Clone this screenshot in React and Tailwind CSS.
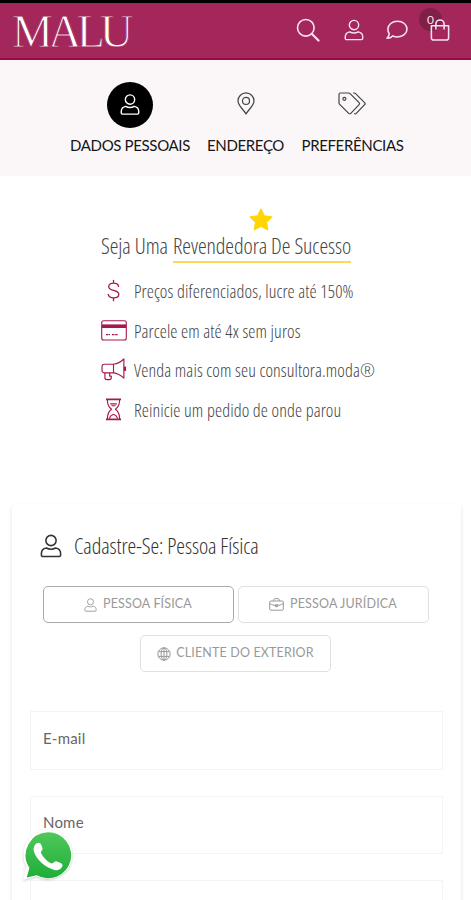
import React, { useState } from 'react';

const UserIcon = ({ className }) => (
  <svg viewBox="0 0 24 26" className={className} fill="none" stroke="currentColor" strokeWidth="1.7" strokeLinejoin="round">
    <circle cx="12" cy="7" r="5.6" />
    <path d="M7 15.2c1.500 .9 3.200 1.300 5 1.300s3.500-.4 5-1.300c3.400.5 5.500 2.900 5.500 6.300v1.400c0 .9-.7 1.600-1.600 1.600H3.100c-.9 0-1.600-.7-1.600-1.600v-1.400c0-3.400 2.100-5.800 5.500-6.300z" />
  </svg>
);

const SearchIcon = ({ className }) => (
  <svg viewBox="0 0 24 24" className={className} fill="none" stroke="currentColor" strokeWidth="1.6" strokeLinecap="round">
    <circle cx="9.800" cy="9.800" r="8.300" />
    <path d="M16 16l6.500 6.500" strokeWidth="2.200" />
  </svg>
);

const ChatIcon = ({ className }) => (
  <svg viewBox="0 0 22 20" className={className} fill="none" stroke="currentColor" strokeWidth="1.600" strokeLinejoin="round">
    <path d="M11.500 1.200c5.300 0 9.500 3.500 9.500 7.900s-4.200 7.900-9.500 7.900c-1.800 0-3.400-.4-4.900-1.100-1.100 1.400-3 2.300-5.600 2.400 1.200-1.300 2-2.800 2.200-4.500C2.300 12.500 1.900 10.900 1.900 9.100c0-4.400 4.300-7.900 9.600-7.900z" />
  </svg>
);

const BagIcon = ({ className }) => (
  <svg viewBox="0 0 20 23" className={className} fill="none" stroke="currentColor" strokeWidth="1.600" strokeLinejoin="round">
    <path d="M1 7h18v12.500a2.500 2.500 0 0 1-2.500 2.500h-13A2.500 2.500 0 0 1 1 19.500z" />
    <path d="M5.700 10.500V5.300a4.300 4.300 0 0 1 8.600 0v5.200" strokeLinecap="round" />
  </svg>
);

const PinIcon = ({ className }) => (
  <svg viewBox="0 0 18 23" className={className} fill="none" stroke="currentColor" strokeWidth="1.200" strokeLinejoin="round">
    <path d="M9 22C6.500 17.500 1 13.500 1 8.900a8 8 0 0 1 16 0C17 13.500 11.500 17.500 9 22z" />
    <circle cx="9" cy="8.900" r="3.500" />
  </svg>
);

const TagsIcon = ({ className }) => (
  <svg viewBox="0 0 28 23" className={className} fill="none" stroke="currentColor" strokeWidth="1.200" strokeLinejoin="round">
    <path d="M1 2.500A1.500 1.500 0 0 1 2.500 1h8.200c.5 0 1 .2 1.400.6l9 9c.6.6.6 1.500 0 2.100l-8.300 8.600c-.6.6-1.500.6-2.100 0l-9-9c-.4-.4-.7-.9-.7-1.400z" />
    <path d="M15 1h1.200c.5 0 1 .2 1.400.6l9 9c.6.6.6 1.500 0 2.100l-8.300 8.600c-.6.6-1.500.6-2.100 0" />
    <circle cx="6.400" cy="6.800" r="1.500" />
  </svg>
);

const DollarIcon = () => (
  <svg viewBox="0 0 14 24" className="mr-[2px] h-[23px] w-[13px]" fill="none" stroke="currentColor" strokeWidth="1.400" strokeLinecap="round">
    <path d="M7 1v3M7 20v3M12.500 7.500C12 5.200 10 4 7.200 4 4 4 1.800 5.500 1.800 7.900c0 5.200 10.900 2.700 10.900 8.100 0 2.500-2.400 4-5.500 4-3.200 0-5.400-1.400-5.900-3.800" />
  </svg>
);

const CardIcon = () => (
  <svg viewBox="0 0 26 21" className="h-[21px] w-[26px]" fill="none" stroke="currentColor">
    <rect x=".7" y=".7" width="24.600" height="19.300" rx="2" strokeWidth="1.100" />
    <path d="M1 6.200h24" strokeWidth="3.600" />
    <path d="M5 14.700h4M11 14.700h6" strokeWidth="1.200" strokeDasharray="2.500 .6" />
  </svg>
);

const MegaphoneIcon = () => (
  <svg viewBox="0 0 27 24" className="h-[23px] w-[26px]" fill="none" stroke="currentColor" strokeWidth="1.200" strokeLinejoin="round">
    <path d="M3.500 6.500h9.500v9H3.500A2.500 2.500 0 0 1 1 13V9a2.500 2.500 0 0 1 2.500-2.500z" />
    <path d="M13 6.500c4-.5 7.500-2.400 10.800-5.500v20c-3.300-3-6.800-5-10.800-5.500" />
    <path d="M4 15.500v4.900c0 1.200.8 2.100 2 2.100h2.700c1.200 0 2-.9 2-2.100v-1.500H9v-3.400" />
    <path d="M25 9v4.500" strokeWidth="2.200" />
  </svg>
);

const HourglassIcon = () => (
  <svg viewBox="0 0 18 24" className="mr-[1px] h-[23px] w-[17px]" fill="none" stroke="currentColor" strokeWidth="1.200" strokeLinejoin="round">
    <path d="M1 1.200h16M1 22.500h16" strokeWidth="1.800" />
    <path d="M2.500 1.500c0 5.500 1.700 8.500 4.500 10.300-2.800 1.900-4.500 5-4.500 10.400M15.500 1.500c0 5.500-1.700 8.500-4.500 10.300 2.800 1.900 4.500 5 4.500 10.400" />
    <path d="M5.500 6h7M6.800 8h4.500M4.500 21.500c.8-2.200 2.300-3.600 4.500-4.500 2.200.9 3.700 2.300 4.500 4.500" />
  </svg>
);

const BriefcaseIcon = ({ className }) => (
  <svg viewBox="0 0 15 13" className={className} fill="none" stroke="currentColor" strokeWidth="1">
    <rect x=".7" y="3" width="13.600" height="9.200" rx="1" />
    <path d="M4.700 3V1.700c0-.6.400-1 1-1h3.600c.6 0 1 .4 1 1V3M.7 5.500c2 1.300 4 2 6.800 2s4.800-.7 6.800-2" />
    <path d="M6.300 6.700h2.400v2H6.300z" />
  </svg>
);

const GlobeIcon = ({ className }) => (
  <svg viewBox="0 0 14 14" className={className} fill="none" stroke="currentColor" strokeWidth="1">
    <circle cx="7" cy="7" r="6.200" />
    <ellipse cx="7" cy="7" rx="2.900" ry="6.200" />
    <path d="M7 .8v12.400M1.300 4.600h11.400M1.300 9.400h11.400" />
  </svg>
);

const WhatsAppIcon = ({ className }) => (
  <svg viewBox="0 0 54 54" className={className}>
    <defs>
      <linearGradient id="wa" x1="0" y1="0" x2="0" y2="1">
        <stop offset="0" stopColor="#4fc85b" />
        <stop offset="1" stopColor="#1eae38" />
      </linearGradient>
    </defs>
    <path d="M27 2a24.500 24.500 0 1 1-11.500 46.200L2 52l3.600-13.200A24.500 24.500 0 0 1 27 2z" fill="#fff" />
    <path d="M27 4.300a23 23 0 1 1-11.200 43L5.800 49.600l2.600-9.800A23 23 0 0 1 27 4.300z" fill="url(#wa)" />
    <path d="M15.300 15.600c1.600-1.300 3.500-1.100 4.300.2 1 1.500 1.500 3.100 1.900 4.800.4 1.800-2.200 3.100-1.400 4.700 2.100 4.200 5.700 8 9.800 10 1.800.8 3.600-2.600 5.400-2.100 1.800.5 3.500 1.200 5.200 2.200 1.200.8 1.300 2.100.6 3.400-1.300 2.500-4.300 4-7.700 3.200-8.600-2-18.900-11-20.600-18.900-.6-2.800.4-5.800 2.500-7.500z" fill="#fff" />
  </svg>
);

const benefits = [
  { icon: <DollarIcon />, text: 'Preços diferenciados, lucre até 150%' },
  { icon: <CardIcon />, text: 'Parcele em até 4x sem juros' },
  { icon: <MegaphoneIcon />, text: 'Venda mais com seu consultora.moda®' },
  { icon: <HourglassIcon />, text: 'Reinicie um pedido de onde parou' },
];

const App = () => {
  const [type, setType] = useState('fisica');

  const typeClass = (name) =>
    `flex h-[37px] w-[191px] items-center justify-center rounded-[5px] border text-[12.500px] tracking-[0.150px] text-[#999] ${
      type === name ? 'border-[#aaa]' : 'border-[#e0e0e0]'
    }`;

  return (
    <div className="h-[900px] w-[471px] overflow-hidden bg-white font-['Lato',sans-serif]">
      <header className="flex h-[60px] items-center justify-between border-t-[3px] border-b-2 border-t-black border-b-[#960b43] bg-[#a3275b] pl-[12px] pr-[21px] text-[#fae3ee]">
        <div className="pt-[3px] font-['Liberation_Serif',serif] text-[46px] leading-[52px] tracking-[-4.700px] text-white [-webkit-text-stroke:0.9px_#a3275b]">MALU</div>
        <nav className="flex items-center pb-[1px]">
          <SearchIcon className="h-[24px] w-[24px]" />
          <UserIcon className="ml-[24px] h-[22px] w-[20px]" />
          <ChatIcon className="ml-[22px] h-[20px] w-[22px]" />
          <div className="relative ml-[22px]">
            <span className="absolute top-[-11px] left-[-11px] flex h-[23px] w-[23px] items-center justify-center rounded-full bg-[#7f2049] text-[12px]">0</span>
            <BagIcon className="relative h-[22px] w-[20px]" />
          </div>
        </nav>
      </header>

      <section className="flex h-[116px] justify-center bg-[#fbf7f9] pt-[22px] pl-[3px] text-[15px] tracking-[-0.350px] text-[#151515]">
        <div className="flex w-[120px] flex-col items-center">
          <div className="flex h-[46px] w-[46px] items-center justify-center rounded-full bg-black pb-[2px] text-white">
            <UserIcon className="h-[23px] w-[20px]" />
          </div>
          <span className="mt-[7px] leading-[21px] whitespace-nowrap">DADOS PESSOAIS</span>
        </div>
        <div className="ml-[17px] flex w-[77px] flex-col items-center">
          <div className="flex h-[46px] items-center pb-[3px] text-[#444]">
            <PinIcon className="h-[23px] w-[18px]" />
          </div>
          <span className="mt-[7px] leading-[21px] whitespace-nowrap">ENDEREÇO</span>
        </div>
        <div className="ml-[17px] flex w-[103px] flex-col items-center">
          <div className="flex h-[46px] items-center pr-[2px] pb-[3px] text-[#444]">
            <TagsIcon className="h-[23px] w-[28px]" />
          </div>
          <span className="mt-[7px] leading-[21px] whitespace-nowrap">PREFERÊNCIAS</span>
        </div>
      </section>

      <section className="h-[328px] pt-[32px] pl-[101px] font-['Open_Sans',sans-serif] font-light text-[#444] [font-stretch:75%]">
        <svg viewBox="0 0 24 23" className="ml-[148px] h-[23px] w-[24px]" fill="#ffd600">
          <path d="M12 .8l3.400 7 7.800 1.100-5.600 5.400 1.300 7.700-6.900-3.600L5.100 22l1.300-7.700L.8 8.900l7.800-1.100z" stroke="#ffd600" strokeLinejoin="round" />
        </svg>
        <h1 className="flex h-[32px] text-[22px] leading-[28px] tracking-[-0.080px] whitespace-nowrap">
          <span className="w-[72px]">Seja Uma</span>
          <span className="w-[178px] border-b-2 border-[#ffd84d]">Revendedora De Sucesso</span>
        </h1>
        <ul className="mt-[8px] text-[18px] tracking-[0.120px]">
          {benefits.map((item) => (
            <li key={item.text} className="flex h-[39.700px] items-center whitespace-nowrap">
              <span className="flex w-[26px] justify-center pb-[1px] text-[#a8184f]">{item.icon}</span>
              <span className="ml-[7px] pt-[1px]">{item.text}</span>
            </li>
          ))}
        </ul>
      </section>

      <main className="ml-[12px] h-[420px] w-[449px] rounded-t-[4px] pt-[25px] shadow-[0_2px_4px_#e4e4e4]">
        <h2 className="flex h-[34px] items-center pl-[28px] font-['Open_Sans',sans-serif] text-[22px] font-light tracking-[-0.100px] text-[#333] [font-stretch:75%]">
          <UserIcon className="h-[24px] w-[22px]" />
          <span className="ml-[12px] pb-[1px] whitespace-nowrap">Cadastre-Se: Pessoa Física</span>
        </h2>
        <div className="mt-[23px] flex flex-wrap justify-center gap-x-[4px] gap-y-[12px] pr-[19px] pl-[17px]">
          <button className={typeClass('fisica')} onClick={() => setType('fisica')}>
            <UserIcon className="mr-[6px] h-[14px] w-[13px]" />
            <span>PESSOA FÍSICA</span>
          </button>
          <button className={typeClass('juridica')} onClick={() => setType('juridica')}>
            <BriefcaseIcon className="mr-[6px] h-[13px] w-[15px]" />
            <span>PESSOA JURÍDICA</span>
          </button>
          <button className={typeClass('exterior')} onClick={() => setType('exterior')}>
            <GlobeIcon className="mr-[5px] h-[14px] w-[14px]" />
            <span>CLIENTE DO EXTERIOR</span>
          </button>
        </div>
        <form className="mt-[39px] ml-[18px] flex w-[413px] flex-col gap-[26px] text-[15px] text-[#666]">
          <label className="h-[59px] border border-[#f4f4f4] pt-[15px] pl-[12px] tracking-[0.200px]">E-mail</label>
          <label className="h-[58px] border border-[#f4f4f4] pt-[14px] pl-[12px] tracking-[0.200px]">Nome</label>
          <div className="h-[58px] border border-[#f4f4f4]" />
        </form>
      </main>

      <a className="fixed top-[828px] left-[21px] drop-shadow-[0_1px_1px_#ccc]">
        <WhatsAppIcon className="h-[54px] w-[54px]" />
      </a>
    </div>
  );
};

export default App;
